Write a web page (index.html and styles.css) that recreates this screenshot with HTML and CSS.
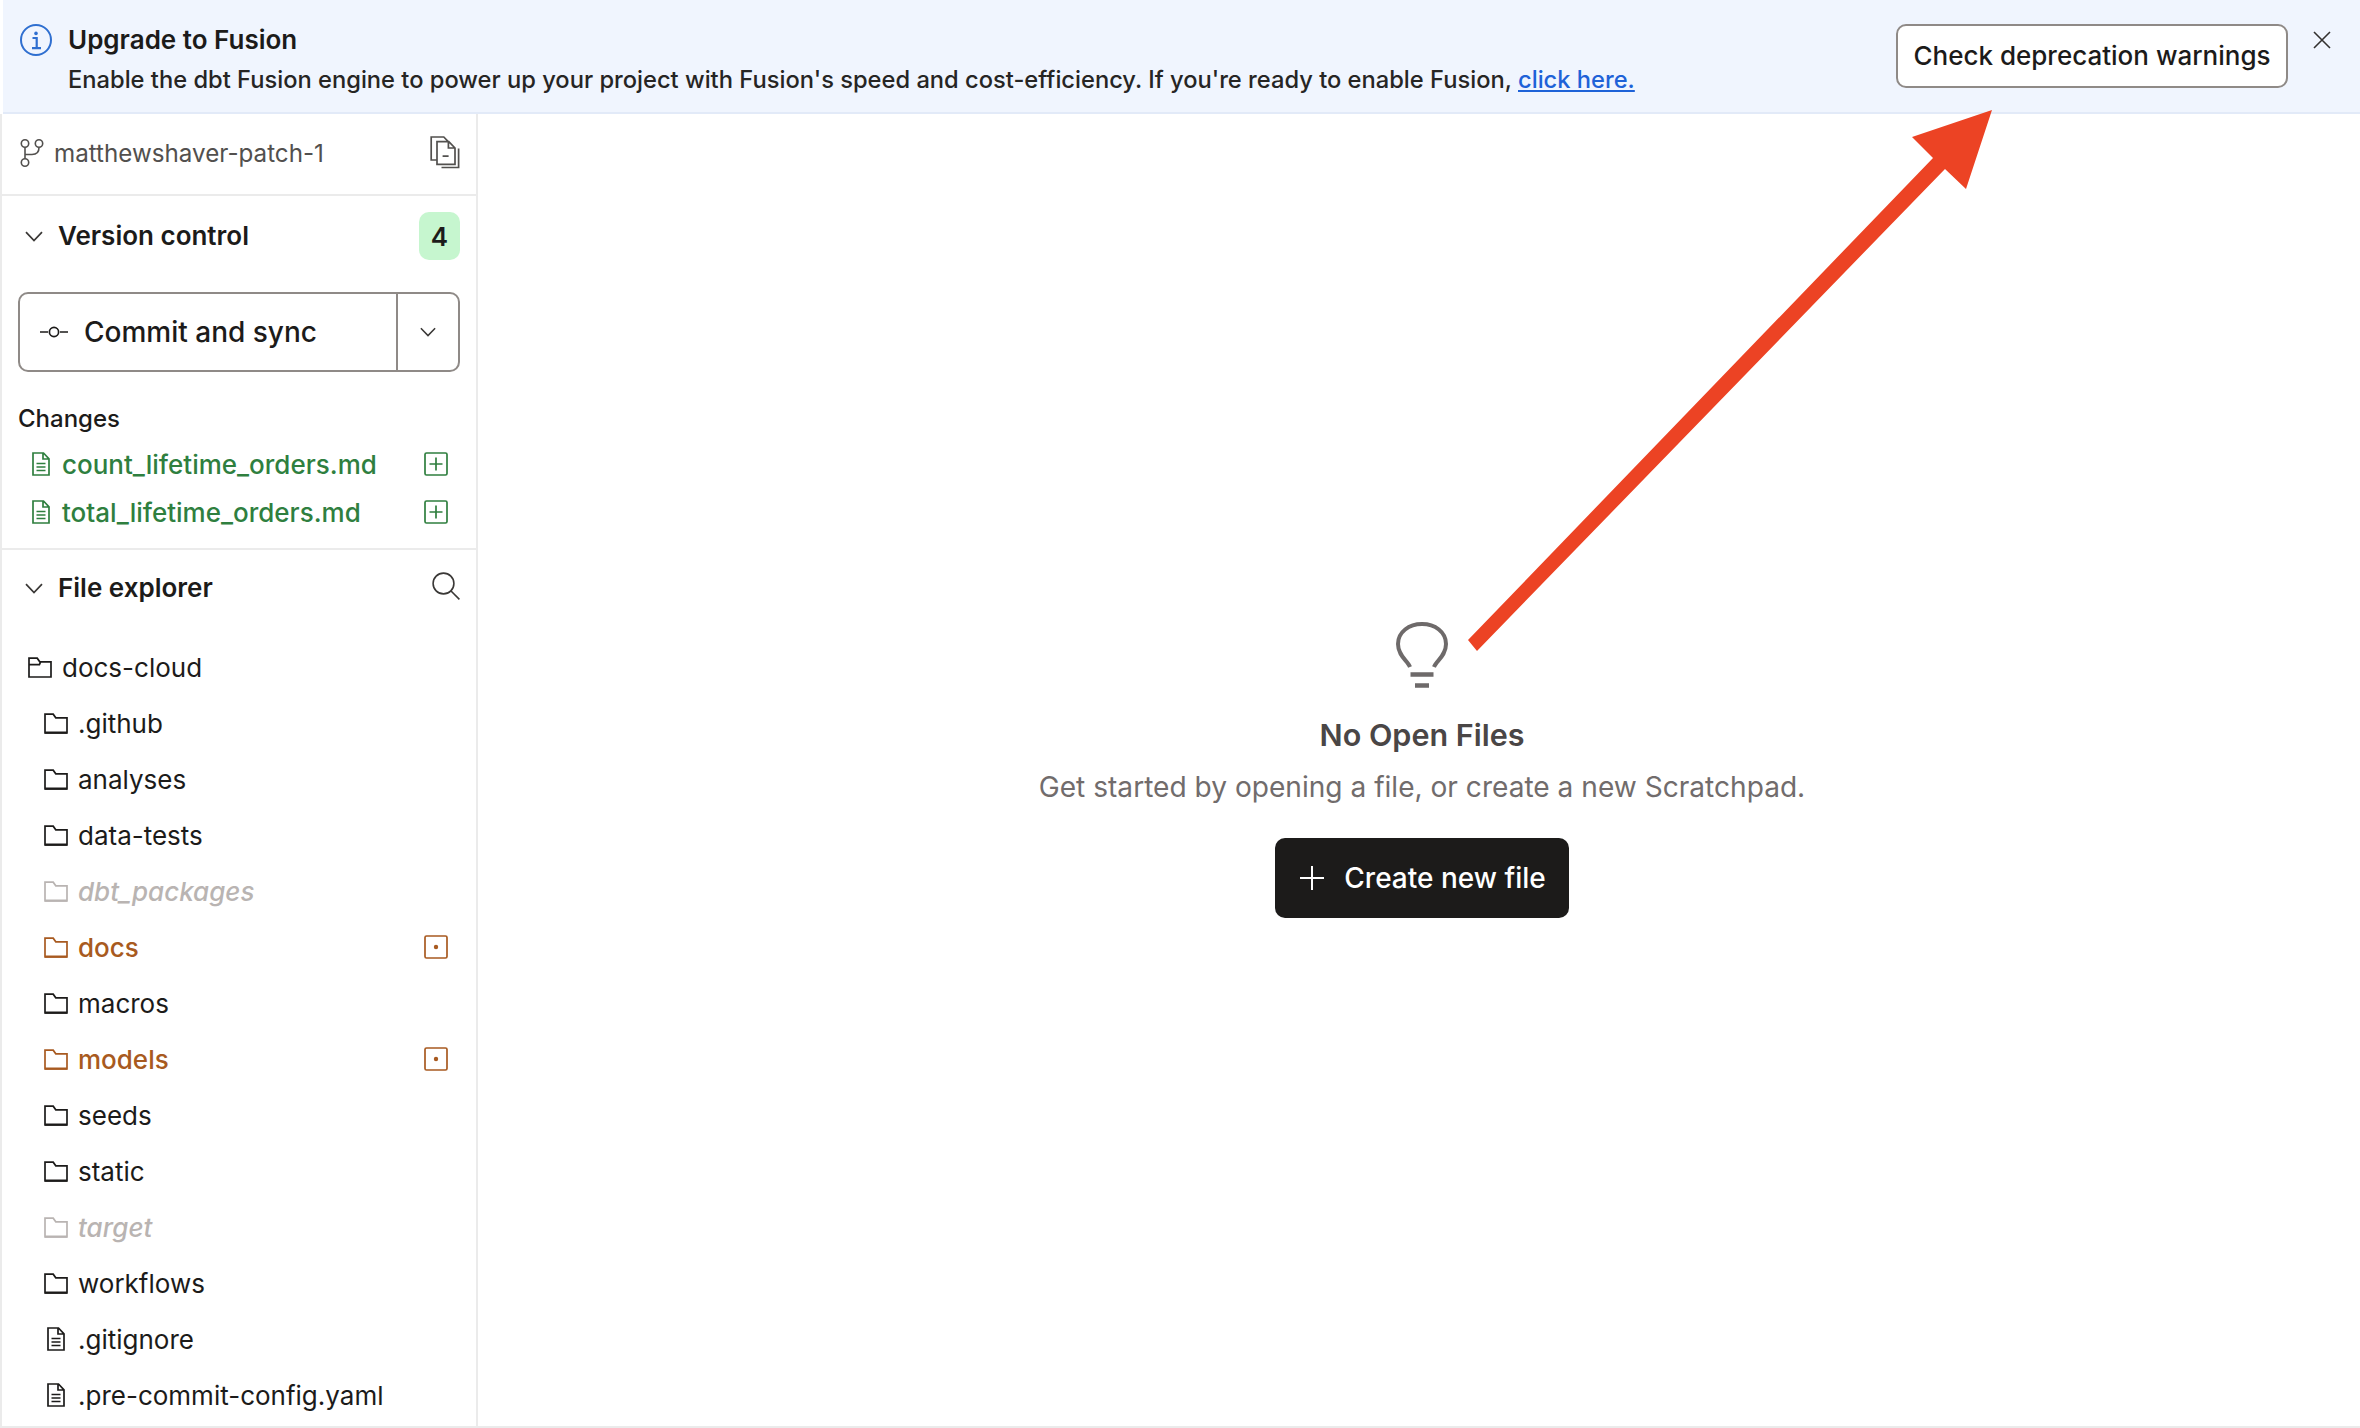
FILE: index.html
```html
<!DOCTYPE html>
<html lang="en">
<head>
<meta charset="utf-8">
<title>Upgrade to Fusion</title>
<link rel="stylesheet" href="styles.css">
</head>
<body>
<svg class="defs" width="0" height="0" aria-hidden="true">
  <symbol id="folder" viewBox="0 0 24 21"><path d="M1 20V1.200h8.200l2.600 3.600H23V20z" fill="none" stroke="currentColor" stroke-width="1.700"/><path d="M1 19.600h22" stroke="currentColor" stroke-width="2.200"/></symbol>
  <symbol id="folder-open" viewBox="0 0 24 21"><path d="M1 20V1.200h8.200l2.600 3.600H23V20zM1 7.600h10.400l1.200-2.800" fill="none" stroke="currentColor" stroke-width="1.700"/></symbol>
  <symbol id="file" viewBox="0 0 18 24"><path d="M1 1h10.500L17 6.800V23H1zM11 1v6h6M4.500 11.500h9M4.500 15h9M4.500 18.500h9" fill="none" stroke="currentColor" stroke-width="1.700"/></symbol>
  <symbol id="chev" viewBox="0 0 18 11"><path d="M1 1.200l8 8.400 8-8.400" fill="none" stroke="currentColor" stroke-width="1.700"/></symbol>
  <symbol id="add" viewBox="0 0 24 24"><rect x="1" y="1" width="22" height="22" rx="1.500" fill="none" stroke="currentColor" stroke-width="1.700"/><path d="M12 5.500v13M5.500 12h13" stroke="currentColor" stroke-width="1.700"/></symbol>
  <symbol id="mod" viewBox="0 0 24 24"><rect x="1" y="1" width="22" height="22" rx="1.500" fill="none" stroke="currentColor" stroke-width="1.700"/><circle cx="12" cy="12" r="2.200" fill="currentColor"/></symbol>
</svg>

<div class="app">
  <header class="banner">
    <svg class="info" viewBox="0 0 32 32"><circle cx="16" cy="16" r="15" fill="none" stroke="currentColor" stroke-width="2"/><circle cx="16" cy="9.400" r="1.800" fill="currentColor"/><path d="M12.500 14h4.200v10M12 24.200h9" fill="none" stroke="currentColor" stroke-width="2.200"/></svg>
    <div class="banner-text">
      <div class="banner-title">Upgrade to Fusion</div>
      <div class="banner-body">Enable the dbt Fusion engine to power up your project with Fusion's speed and cost-efficiency. If you're ready to enable Fusion, <a class="link" href="#">click here.</a></div>
    </div>
    <button class="check-btn">Check deprecation warnings</button>
    <svg class="close" viewBox="0 0 18 18"><path d="M1 1l16 16M17 1L1 17" stroke="currentColor" stroke-width="1.600"/></svg>
  </header>

  <div class="workspace">
    <aside class="sidebar">
      <div class="branch">
        <svg class="branch-icon" viewBox="0 0 24 28"><circle cx="5" cy="4.500" r="3.700" fill="none" stroke="currentColor" stroke-width="1.600"/><circle cx="19" cy="4.500" r="3.700" fill="none" stroke="currentColor" stroke-width="1.600"/><circle cx="5" cy="23.500" r="3.700" fill="none" stroke="currentColor" stroke-width="1.600"/><path d="M5 8.200v11.600M5 15.500h7c4 0 7-2 7-7" fill="none" stroke="currentColor" stroke-width="1.600"/></svg>
        <span class="branch-name">matthewshaver-patch-1</span>
        <svg class="copy-icon" viewBox="0 0 30 33"><path d="M7 24H1.200V1h12.600L19 6.300M7 5.600h11.800L25 12v16.400H7zM18.400 5.600V12H25M12.600 20.200h6" fill="none" stroke="currentColor" stroke-width="1.700"/><path d="M28.600 12.500v19H11.500" fill="none" stroke="currentColor" stroke-width="1.700"/></svg>
      </div>

      <section class="vc">
        <div class="section-head">
          <svg class="chev"><use href="#chev"/></svg>
          <span class="section-title">Version control</span>
          <span class="badge">4</span>
        </div>
        <div class="commit">
          <div class="commit-main">
            <svg class="commit-icon" viewBox="0 0 28 12"><path d="M0 6h8M20 6h8" stroke="currentColor" stroke-width="1.700"/><circle cx="14" cy="6" r="4.600" fill="none" stroke="currentColor" stroke-width="1.700"/></svg>
            <span>Commit and sync</span>
          </div>
          <div class="commit-more"><svg class="chev-small"><use href="#chev"/></svg></div>
        </div>
        <div class="changes-title">Changes</div>
        <div class="change"><svg class="ic-file"><use href="#file"/></svg><span class="grow">count_lifetime_orders.md</span><svg class="ic-status"><use href="#add"/></svg></div>
        <div class="change"><svg class="ic-file"><use href="#file"/></svg><span class="grow">total_lifetime_orders.md</span><svg class="ic-status"><use href="#add"/></svg></div>
      </section>

      <section class="explorer">
        <div class="section-head explorer-head">
          <svg class="chev"><use href="#chev"/></svg>
          <span class="section-title">File explorer</span>
          <svg class="search" viewBox="0 0 28 28"><circle cx="11.500" cy="11.500" r="10.400" fill="none" stroke="currentColor" stroke-width="1.600"/><path d="M18.800 18.800l8.600 8.600" stroke="currentColor" stroke-width="1.600"/></svg>
        </div>
        <div class="tree">
          <div class="row root"><svg class="ic-folder"><use href="#folder-open"/></svg><span class="grow">docs-cloud</span></div>
          <div class="row"><svg class="ic-folder"><use href="#folder"/></svg><span class="grow">.github</span></div>
          <div class="row"><svg class="ic-folder"><use href="#folder"/></svg><span class="grow">analyses</span></div>
          <div class="row"><svg class="ic-folder"><use href="#folder"/></svg><span class="grow">data-tests</span></div>
          <div class="row ignored"><svg class="ic-folder"><use href="#folder"/></svg><span class="grow">dbt_packages</span></div>
          <div class="row modified"><svg class="ic-folder"><use href="#folder"/></svg><span class="grow">docs</span><svg class="ic-status"><use href="#mod"/></svg></div>
          <div class="row"><svg class="ic-folder"><use href="#folder"/></svg><span class="grow">macros</span></div>
          <div class="row modified"><svg class="ic-folder"><use href="#folder"/></svg><span class="grow">models</span><svg class="ic-status"><use href="#mod"/></svg></div>
          <div class="row"><svg class="ic-folder"><use href="#folder"/></svg><span class="grow">seeds</span></div>
          <div class="row"><svg class="ic-folder"><use href="#folder"/></svg><span class="grow">static</span></div>
          <div class="row ignored"><svg class="ic-folder"><use href="#folder"/></svg><span class="grow">target</span></div>
          <div class="row"><svg class="ic-folder"><use href="#folder"/></svg><span class="grow">workflows</span></div>
          <div class="row file"><svg class="ic-file"><use href="#file"/></svg><span class="grow">.gitignore</span></div>
          <div class="row file"><svg class="ic-file"><use href="#file"/></svg><span class="grow">.pre-commit-config.yaml</span></div>
        </div>
      </section>
    </aside>

    <main class="main">
      <svg class="bulb" viewBox="0 0 52 66"><path d="M14 45C12 39 2 34 2 22 2 10 13 2 26 2s24 8 24 20c0 12-10 17-12 23" fill="none" stroke="currentColor" stroke-width="4"/><path d="M14.500 52.500h23M19 63.500h14" stroke="currentColor" stroke-width="4.400"/></svg>
      <h1 class="empty-title">No Open Files</h1>
      <p class="empty-sub">Get started by opening a file, or create a new Scratchpad.</p>
      <button class="create-btn">
        <svg class="plus" viewBox="0 0 24 24"><path d="M12 0v24M0 12h24" stroke="currentColor" stroke-width="2"/></svg>
        <span>Create new file</span>
      </button>
    </main>
  </div>

  <div class="edge-shadow"></div>
  <svg class="arrow" viewBox="0 0 2360 1428"><polygon points="1992,110 1912,137 1933,158 1468,640 1477,651 1945,169 1966,189"/></svg>
</div>
</body>
</html>
```

FILE: styles.css
```css
* { box-sizing: border-box; }
html, body { margin: 0; padding: 0; }
body {
  width: 2360px;
  height: 1428px;
  overflow: hidden;
  background: #fff;
  font-family: Inter, "Liberation Sans", sans-serif;
  color: #1c1b1a;
  font-size: 26px;
}
.defs { position: absolute; }
.app {
  position: relative;
  width: 2360px;
  height: 1428px;
  display: flex;
  flex-direction: column;
  border-bottom: 2px solid #ebebeb;
}

/* banner */
.banner {
  height: 114px;
  flex: none;
  display: flex;
  align-items: flex-start;
  margin-left: 3px;
  padding: 24px 0 0 17px;
  background: #f0f5fe;
  border-bottom: 2px solid #e2eaf8;
}
.info { width: 32px; height: 32px; color: #2f6fd0; flex: none; }
.banner-text { flex: 1; margin-left: 16px; }
.banner-title { font-size: 26px; font-weight: 600; line-height: 32px; }
.banner-body { font-size: 23.700px; font-weight: 450; line-height: 32px; margin-top: 8px; color: #262524; }
.link { color: #1e62d8; text-decoration: underline; }
.check-btn {
  width: 392px;
  height: 64px;
  flex: none;
  padding: 0 0 2px;
  background: #fff;
  border: 2px solid #8f8a87;
  border-radius: 10px;
  font: 500 26px Inter, "Liberation Sans", sans-serif;
  color: #1c1b1a;
}
.close { width: 18px; height: 18px; flex: none; color: #33312f; margin: 7px 29px 0 25px; }

/* layout */
.workspace { flex: 1; display: flex; min-height: 0; }
.sidebar {
  width: 478px;
  flex: none;
  display: flex;
  flex-direction: column;
  border-left: 2px solid #ebebeb;
  border-right: 2px solid #ebebeb;
}

/* branch */
.branch {
  height: 82px;
  flex: none;
  display: flex;
  align-items: center;
  padding: 0 16px 2px 18px;
  border-bottom: 2px solid #ebebeb;
  color: #52504e;
}
.branch-icon { width: 24px; height: 28px; flex: none; }
.branch-name { flex: 1; margin-left: 10px; font-size: 24.200px; font-weight: 430; }
.copy-icon { width: 30px; height: 33px; flex: none; margin-top: -2px; }

/* sections */
.vc {
  height: 354px;
  flex: none;
  border-bottom: 2px solid #ebebeb;
}
.section-head {
  height: 80px;
  display: flex;
  align-items: center;
  padding: 0 16px 0 23px;
}
.chev { width: 18px; height: 11px; flex: none; color: #3a3836; }
.section-title { flex: 1; margin-left: 15px; font-weight: 600; font-size: 26px; margin-top: -1px; }
.badge {
  width: 41px;
  height: 48px;
  display: flex;
  align-items: center;
  justify-content: center;
  border-radius: 10px;
  background: #c6f6cf;
  font-weight: 600;
}
.commit {
  height: 80px;
  margin: 16px 16px 0;
  display: flex;
  border: 2px solid #8f8a87;
  border-radius: 10px;
}
.commit-main {
  flex: 1;
  display: flex;
  align-items: center;
  padding-left: 20px;
  gap: 16px;
  border-right: 2px solid #8f8a87;
  font-size: 28px;
  font-weight: 500;
}
.commit-icon { width: 28px; height: 12px; flex: none; }
.commit-more { width: 60px; flex: none; display: flex; align-items: center; justify-content: center; }
.chev-small { width: 16px; height: 10px; color: #3a3836; }
.changes-title { margin: 30px 0 4px 16px; font-size: 24px; font-weight: 550; line-height: 34px; }
.change {
  height: 48px;
  display: flex;
  align-items: center;
  padding: 0 28px 0 30px;
  color: #2f7f3f;
  font-weight: 490;
  font-size: 26px;
}
.ic-file { width: 18px; height: 24px; flex: none; }
.ic-status { width: 24px; height: 24px; flex: none; }
.ic-folder { width: 24px; height: 21px; flex: none; }
.grow { flex: 1; margin-left: 12px; }

/* explorer */
.explorer { flex: 1; min-height: 0; }
.explorer-head { height: 76px; }
.search { width: 28px; height: 28px; flex: none; color: #3a3836; margin-top: -4px; }
.tree { margin-top: 13px; }
.row {
  height: 56px;
  display: flex;
  align-items: center;
  padding: 0 28px 0 42px;
  font-weight: 430;
  font-size: 26px;
}
.row .grow { margin-left: 10px; }
.root { padding-left: 26px; }
.file { padding-left: 45px; }
.row.file .grow { margin-left: 13px; }
.modified { color: #a85a20; font-weight: 500; }
.ignored { color: #b9b4b2; font-style: italic; font-weight: 500; }

/* main */
.main {
  flex: 1;
  display: flex;
  flex-direction: column;
  align-items: center;
  padding: 508px 0 0 6px;
  min-width: 0;
}
.bulb { width: 52px; height: 66px; color: #6e6a6a; flex: none; }
.empty-title { margin: 27px 0 0; font-size: 30.500px; font-weight: 600; line-height: 40px; color: #4a4646; }
.empty-sub { margin: 14px 0 0; font-size: 28.100px; line-height: 36px; color: #716c6c; font-weight: 425; }
.create-btn {
  width: 294px;
  height: 80px;
  margin-top: 33px;
  padding: 0 0 0 2px;
  display: flex;
  align-items: center;
  justify-content: center;
  gap: 20px;
  background: #1c1b1a;
  border: 0;
  border-radius: 10px;
  color: #fff;
  font: 500 28px Inter, "Liberation Sans", sans-serif;
}
.plus { width: 24px; height: 24px; flex: none; }

/* overlays */
.edge-shadow {
  position: absolute;
  right: 0;
  top: 190px;
  width: 70px;
  height: 300px;
  background: radial-gradient(ellipse closest-side at 100% 50%, #f7f7f7 0%, #fbfbfb 50%, #ffffff 100%);
}
.arrow { position: absolute; left: 0; top: 0; width: 2360px; height: 1428px; pointer-events: none; }
.arrow polygon { fill: #ec4324; }
```
